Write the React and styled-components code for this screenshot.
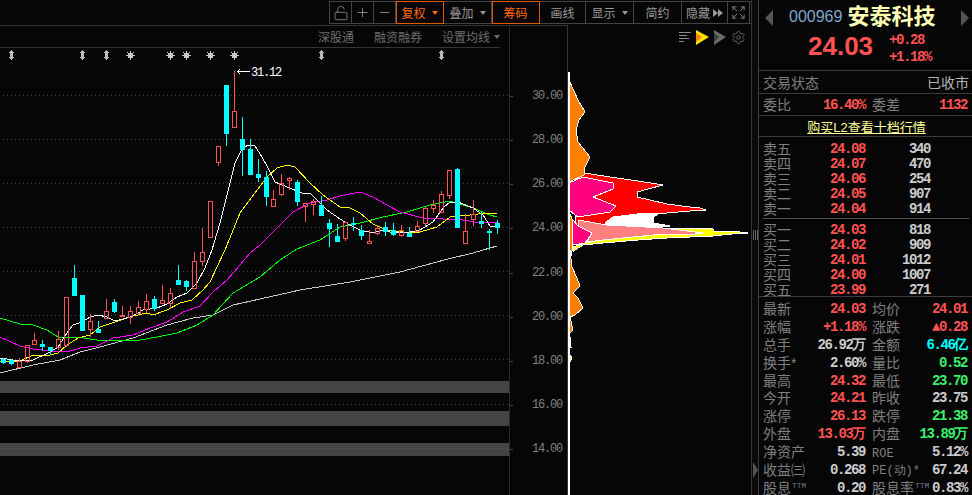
import React from "react"
import styled, { createGlobalStyle } from "styled-components"
import { LockOpen, Plus, Minus, Expand, Settings } from "lucide-react"

const RED = "#ff5252"
const CYAN = "#00ffff"
const GREEN = "#3cf06c"
const LIGHT = "#cccccc"
const MONO = `"Liberation Mono", "DejaVu Sans Mono", monospace`
const CJK = `"Liberation Sans", "Noto Sans CJK SC", sans-serif`

const GlobalStyle = createGlobalStyle`
  html, body {
    margin: 0;
    padding: 0;
    background: #060606;
  }
  * {
    box-sizing: border-box;
  }
`

const Page = styled.div`
  width: 972px;
  height: 495px;
  display: flex;
  background: #060606;
  overflow: hidden;
  font-family: ${CJK};
`

const Main = styled.div`
  width: 751px;
  display: flex;
  flex-direction: column;
`

const TopBar = styled.div`
  height: 25px;
  padding: 1px 0 0 329px;
`

const Toolbar = styled.div`
  display: flex;
  height: 23px;
  border: 1px solid #444;
  border-right: 0;
`

const Tool = styled.div`
  width: ${(p) => p.$w}px;
  display: flex;
  align-items: center;
  justify-content: center;
  gap: 6px;
  flex: none;
  margin: -1px 0;
  height: 23px;
  border-right: 1px solid #444;
  border-top: 1px solid #444;
  border-bottom: 1px solid #444;
  color: ${(p) => (p.$active ? "#ff6a10" : "#999")};
  font-size: 12px;
  ${(p) => p.$active && "outline: 1px solid #e05a00; outline-offset: -1px;"}
`

const Caret = styled.span`
  width: 0;
  height: 0;
  border-left: 3px solid transparent;
  border-right: 3px solid transparent;
  border-top: 4px solid ${(p) => p.$color || "#999"};
`

const Chevrons = styled.span`
  display: flex;
  margin-left: -3px;
  & > i {
    width: 0;
    height: 0;
    border-top: 4px solid transparent;
    border-bottom: 4px solid transparent;
    border-left: 5px solid #999;
  }
`

const Body = styled.div`
  flex: 1;
  display: flex;
`

const KlineCol = styled.div`
  width: 510px;
  border-top: 1px solid #333;
  border-right: 1px solid #2a2a2a;
`

const SubBar = styled.div`
  width: 500px;
  height: 22px;
  display: flex;
  align-items: center;
  justify-content: flex-end;
  gap: 20px;
  border-bottom: 1px solid #333;
  color: #6e6e6e;
  font-size: 12px;
`

const SubItem = styled.span`
  display: flex;
  align-items: center;
  gap: 4px;
`

const KlineSvg = styled.svg`
  display: block;
  width: 509px;
  height: 447px;
`

const AxisCol = styled.div`
  width: 58px;
  padding-top: 48px;
  border-top: 1px solid #333;
  border-right: 1px solid #333;
`

const AxisLabel = styled.div`
  position: relative;
  height: 44.15px;
  display: flex;
  align-items: center;
  padding-left: 22px;
  color: #808080;
  font: 12px ${MONO};
  letter-spacing: -1.2px;
  &::before {
    content: "";
    position: absolute;
    left: 0;
    top: 50%;
    width: 3px;
    height: 1px;
    background: #444;
  }
`

const ChipCol = styled.div`
  width: 183px;
  display: flex;
  flex-direction: column;
  padding-top: 1px;
`

const ChipHead = styled.div`
  height: 22px;
  display: flex;
  align-items: center;
  justify-content: flex-end;
  gap: 5px;
  padding-right: 5px;
`

const ChipSvg = styled.svg`
  display: block;
  width: 183px;
  height: 447px;
`

const Handle = styled.div`
  width: 7px;
  display: flex;
  flex-direction: column;
  align-items: center;
  padding-top: 230px;
  border-left: 1px solid #333;
  background: #0a0a0a;
`

const Grip = styled.div`
  width: 5px;
  height: 10px;
  background: repeating-linear-gradient(90deg, #666 0 1px, transparent 1px 2px);
`

const Nudge = styled.div`
  margin-top: 222px;
  width: 0;
  height: 0;
  border-top: 8px solid transparent;
  border-bottom: 8px solid transparent;
  border-left: 5px solid #555;
`

const Side = styled.div`
  flex: 1;
  border-left: 1px solid #3c3c3c;
  color: #808080;
  font-size: 14px;
`

const TitleRow = styled.div`
  height: 30px;
  display: flex;
  align-items: flex-start;
  padding: 6px 3px 0 6px;
`

const Arrow = styled.span`
  width: 0;
  height: 0;
  margin-top: 4px;
  border-top: 8px solid transparent;
  border-bottom: 8px solid transparent;
  ${(p) => (p.$right ? "border-left: 8px solid #555; margin-left: auto;" : "border-right: 8px solid #555;")}
`

const Code = styled.span`
  margin-left: 16px;
  line-height: 22px;
  color: #7fa6cc;
  font-size: 16px;
`

const Name = styled.span`
  margin-left: 5px;
  line-height: 22px;
  color: #ffffb4;
  font-size: 22px;
  font-weight: 700;
`

const PriceRow = styled.div`
  height: 41px;
  display: flex;
  align-items: center;
  padding: 0 0 7px 49px;
  border-bottom: 1px solid #3c3c3c;
`

const Price = styled.span`
  width: 81px;
  color: ${RED};
  font-size: 26px;
  font-weight: 700;
`

const Change = styled.div`
  margin-top: 4px;
  color: ${RED};
  font: bold 14px/17px ${MONO};
  letter-spacing: -1.4px;
`

const InfoRow = styled.div`
  height: ${(p) => p.$h}px;
  display: grid;
  grid-template-columns: 103px 96px;
  column-gap: 6px;
  align-items: center;
  padding-left: 4px;
  border-bottom: 1px solid #3c3c3c;
`

const StatusRow = styled.div`
  height: 23px;
  display: flex;
  align-items: center;
  justify-content: space-between;
  padding: 0 3px 0 4px;
  border-bottom: 1px solid #3c3c3c;
`

const StatusValue = styled.span`
  color: #b4b4b4;
`

const LinkRow = styled.div`
  height: 21px;
  display: flex;
  align-items: center;
  justify-content: center;
  padding-left: 2px;
  border-bottom: 1px solid #3c3c3c;
  color: #ffff96;
  font-size: 13px;
  text-decoration: underline;
`

const Book = styled.div`
  height: 160px;
  padding: 4px 0 0 4px;
  border-bottom: 1px solid #3c3c3c;
`

const BookRow = styled.div`
  height: 15px;
  display: grid;
  grid-template-columns: 62px 41px 65px;
  align-items: center;
  line-height: 15px;
`

const BookDivider = styled.div`
  height: 1px;
  margin: 2px 3px 3px 0;
  background: #555;
`

const Right = styled.span`
  padding-right: 1px;
  text-align: right;
  white-space: nowrap;
  color: ${(p) => p.$color || LIGHT};
  font: bold 14px ${MONO};
  letter-spacing: -1.4px;
`

const Stats = styled.div`
  display: grid;
  grid-template-columns: 103px 96px;
  column-gap: 6px;
  grid-auto-rows: 17.9px;
  padding: 3px 0 0 4px;
`

const Cell = styled.div`
  display: flex;
  align-items: center;
  justify-content: space-between;
  line-height: 16px;
  white-space: nowrap;
`

const MonoLabel = styled.span`
  font: 12px ${MONO};
`

const Ttm = styled.sup`
  margin-left: 1px;
  color: #6c7a88;
  font: 8px ${MONO};
  vertical-align: 5px;
  line-height: 0;
`

// page coordinates, the svg viewBox starts at y = 48
const ma5 = "0,358 20,361 33,360 50,352 58,347 67,333 73,325 82,322 90,317 98,315 107,317 115,321 123,319 133,316 143,310 157,308 167,304 177,297 187,293 197,283 205,268 212,250 220,223 230,183 235,163 242,149 248,145 255,146 262,157 268,168 275,182 287,187 302,193 310,193 317,200 327,210 340,219 350,225 360,230 373,233 383,230 393,233 410,232 420,230 433,222 443,208 450,202 458,202 473,208 483,215 490,226 497,226"
const ma10 = "0,361 20,361 33,355 50,355 58,353 67,345 78,338 90,335 100,327 115,322 133,316 147,313 153,315 167,310 180,303 192,300 203,290 210,282 217,267 225,250 240,213 252,197 267,177 277,168 287,165 295,167 310,183 323,195 340,207 350,208 360,213 373,224 387,230 403,232 420,232 437,227 450,217 470,215 487,213 497,213"
const ma20 = "0,337 20,346 33,349 50,351 67,352 80,348 97,346 113,338 133,335 150,328 167,322 183,312 200,306 213,292 227,280 240,265 250,253 260,245 277,228 293,212 310,203 327,200 340,196 360,192 373,197 387,205 400,212 423,218 443,219 463,220 480,223 497,222"
const ma30 = "0,318 20,324 33,325 47,330 58,337 77,337 97,340 117,340 140,340 157,337 177,333 197,325 213,315 233,293 260,277 280,260 297,249 320,240 340,227 360,223 383,217 407,212 430,205 450,201 473,208 490,215 497,217"
const ma60 = "0,373 33,365 60,360 80,352 100,347 133,338 167,325 193,318 213,315 233,305 260,299 300,290 350,282 400,272 448,259 473,253 490,248 497,246"

// x, body top, body bottom, wick top, wick bottom, up
const candles = [
  [3, 359, 362, 358, 364, 0], [11, 360, 363, 359, 365, 0], [19, 361, 367, 358, 367, 1],
  [27, 345, 361, 345, 363, 1], [34, 340, 344, 333, 345, 1], [42, 344, 346, 340, 351, 0],
  [50, 347, 350, 347, 355, 0], [58, 339, 347, 331, 350, 1], [66, 297, 345, 297, 347, 1],
  [74, 278, 295, 265, 296, 0], [82, 295, 330, 295, 331, 0], [90, 321, 329, 314, 337, 1],
  [98, 329, 332, 321, 333, 0], [106, 311, 318, 299, 318, 1], [114, 302, 311, 299, 313, 0],
  [122, 315, 316, 306, 317, 1], [130, 311, 317, 306, 324, 1], [138, 307, 313, 301, 313, 1],
  [146, 301, 309, 294, 313, 1], [154, 299, 308, 296, 311, 0], [162, 300, 303, 285, 303, 1],
  [170, 293, 303, 288, 309, 1], [178, 280, 284, 265, 285, 0], [186, 281, 286, 280, 291, 0],
  [194, 261, 288, 252, 288, 1], [202, 252, 261, 228, 266, 1], [210, 201, 237, 201, 237, 1],
  [218, 146, 162, 146, 166, 1], [226, 85, 133, 85, 146, 0], [234, 111, 127, 71, 128, 1],
  [242, 139, 149, 117, 176, 0], [250, 149, 174, 139, 175, 0], [258, 174, 177, 159, 182, 0],
  [266, 177, 196, 171, 206, 0], [273, 199, 206, 190, 207, 1], [281, 183, 194, 174, 196, 1],
  [289, 178, 180, 177, 190, 1], [297, 182, 201, 180, 206, 0], [305, 203, 206, 203, 222, 1],
  [313, 201, 204, 199, 215, 1], [321, 205, 215, 196, 216, 0], [329, 223, 228, 219, 247, 0],
  [337, 236, 241, 224, 242, 0], [345, 222, 238, 222, 241, 1], [353, 223, 224, 217, 231, 0],
  [361, 230, 235, 225, 240, 0], [369, 241, 243, 230, 243, 1], [377, 228, 233, 225, 235, 1],
  [385, 227, 231, 222, 236, 0], [393, 230, 234, 223, 236, 0], [401, 230, 235, 225, 237, 1],
  [409, 233, 236, 227, 237, 0], [417, 226, 231, 221, 232, 1], [425, 208, 223, 207, 226, 1],
  [433, 205, 208, 200, 213, 1], [441, 194, 212, 191, 213, 1], [449, 170, 195, 170, 199, 1],
  [457, 169, 227, 168, 227, 0], [465, 231, 243, 214, 244, 1], [473, 214, 219, 200, 226, 1],
  [481, 221, 223, 212, 228, 0], [489, 231, 232, 229, 250, 0], [497, 223, 227, 220, 234, 0],
]

const grid = [95, 139, 183, 227, 271, 315, 359, 404, 448]
const bands = [[381, 12], [411, 15], [443, 13]]
const diamonds = [11, 82, 106, 321, 441]
const stars = [130, 170, 186, 210, 234]

function Candle({ c }) {
  const [x, top, bottom, wickTop, wickBottom, up] = c
  const color = up ? RED : CYAN
  const mid = x + 0.5
  return (
    <g>
      <line x1={mid} x2={mid} y1={wickTop} y2={top} stroke={color} />
      <line x1={mid} x2={mid} y1={bottom} y2={wickBottom} stroke={color} />
      {up ? (
        <rect x={x - 2 + 0.5} y={top + 0.5} width={4} height={Math.max(bottom - top, 1)} fill="none" stroke={color} />
      ) : (
        <rect x={x - 2} y={top} width={5} height={Math.max(bottom - top, 1) + 1} fill={color} />
      )}
    </g>
  )
}

function Kline() {
  return (
    <KlineSvg viewBox="0 48 509 447" shapeRendering="crispEdges">
      {bands.map(([y, h]) => (
        <rect key={y} x="0" y={y} width="509" height={h} fill="#444" />
      ))}
      {grid.map((y) => (
        <line key={y} x1="3" x2="509" y1={y + 0.5} y2={y + 0.5} stroke={y === 448 ? "#666" : "#444"} strokeDasharray="1 3" />
      ))}
      {diamonds.map((x) => (
        <path
          key={x}
          d={`M${x + 0.5} 50 L${x + 3} 53 H${x + 2} V57 H${x + 3} L${x + 0.5} 60 L${x - 2} 57 H${x - 1} V53 H${x - 2} Z`}
          fill="#bbb"
        />
      ))}
      {stars.map((x) => (
        <g key={x} stroke="#c8c8c8">
          <circle cx={x + 0.5} cy="55.5" r="2.5" fill="#c8c8c8" stroke="none" />
          <line x1={x + 0.5} x2={x + 0.5} y1="51" y2="60" />
          <line x1={x - 4} x2={x + 5} y1="55.5" y2="55.5" />
          <line x1={x - 2.5} x2={x + 3.5} y1="52.5" y2="58.5" />
          <line x1={x - 2.5} x2={x + 3.5} y1="58.5" y2="52.5" />
        </g>
      ))}
      <polyline points={ma60} fill="none" stroke="#c8c8c8" />
      <polyline points={ma30} fill="none" stroke="#00ff00" />
      <polyline points={ma20} fill="none" stroke="#ff00ff" />
      <polyline points={ma10} fill="none" stroke="#ffff00" />
      <polyline points={ma5} fill="none" stroke="#ffffff" />
      {candles.map((c) => (
        <Candle key={c[0]} c={c} />
      ))}
      <path d="M237 71.5 H250 M237 71.5 L240 69.5 M237 71.5 L240 73.5" fill="none" stroke="#fff" />
      <text x="251" y="75.5" fill="#fff" fontFamily={MONO} fontSize="12" letterSpacing="-1.2" shapeRendering="auto">31.12</text>
    </KlineSvg>
  )
}

const chipShapes = [
  ["#00ffff", "690,211 708,210 690,208"],
  ["#ff0000", "584,173 610,177 638,181 663,185 637,192 637,197 667,204 690,207 700,208 706,210 690,211 667,213 637,215 613,217 605,223 607,225 578,226 575,226 575,180"],
  ["#ffffff", "605,223 613,217 637,214 660,213 653,217 654,223 670,226 610,226"],
  ["#ffff00", "663,228 713,229 714,231 732,231 748,233 732,234 713,236 667,238 638,240 603,243 583,245 575,250 573,252 573,247 585,243"],
  ["#ff8080", "578,220 607,225 663,228 703,233 695,234 663,234 643,236 603,240 587,242 592,233 578,226"],
  ["#ff0080", "569,183 583,177 613,183 613,189 593,197 616,206 610,212 578,217 570,211"],
  ["#ff0080", "573,220 578,226 592,233 585,243 573,245 572,232"],
  ["#ff8000", "569,80 578,100 585,112 579,120 576,130 578,142 590,157 585,167 584,175 569,182"],
  ["#ff8000", "569,211 573,222 572,232 573,245 570,262 569,262"],
  ["#ff8000", "570,250 572,267 577,278 580,286 573,293 578,298 583,308 575,315 570,317 573,330 570,333 569,333"],
  ["#ff8000", "570,337 571,347 569,347"],
  ["#ffff00", "569,355 572,357 570,362 569,362"],
]

function Chips() {
  return (
    <ChipSvg viewBox="568 48 183 447" shapeRendering="crispEdges">
      {chipShapes.map(([fill, points]) => (
        <polygon key={points} points={points} fill={fill} stroke={fill === "#00ffff" ? "none" : "#fff"} />
      ))}
      <line x1="568.5" x2="568.5" y1="72" y2="495" stroke="#fff" strokeWidth="2" />
    </ChipSvg>
  )
}

function ChipTools() {
  return (
    <ChipHead>
      <svg width="12" height="13" viewBox="0 0 12 13" stroke="#8c8c8c" shapeRendering="crispEdges">
        <path d="M0 1.5H12M0 4.5H8M0 7.5H10M0 10.5H5" />
      </svg>
      <svg width="13" height="15" viewBox="0 0 13 15">
        <path d="M0 0L13 7L0 15Z" fill="#ffe000" />
        <path d="M0 3L6 7L0 12Z" fill="#ff8000" />
      </svg>
      <svg width="12" height="15" viewBox="0 0 12 15">
        <path d="M0 0L12 7L0 15Z" fill="#6a6a6a" />
        <path d="M0 3L5 7L0 12Z" fill="#3c3c3c" />
      </svg>
      <Settings size={15} color="#606060" strokeWidth={1.6} />
    </ChipHead>
  )
}

const sells = [
  ["卖五", "24.08", "340"],
  ["卖四", "24.07", "470"],
  ["卖三", "24.06", "254"],
  ["卖二", "24.05", "907"],
  ["卖一", "24.04", "914"],
]
const buys = [
  ["买一", "24.03", "818"],
  ["买二", "24.02", "909"],
  ["买三", "24.01", "1012"],
  ["买四", "24.00", "1007"],
  ["买五", "23.99", "271"],
]

const stats = [
  ["最新", "24.03", RED, "均价", "24.01", RED],
  ["涨幅", "+1.18%", RED, "涨跌", "▲0.28", RED],
  ["总手", "26.92万", LIGHT, "金额", "6.46亿", CYAN],
  ["换手*", "2.60%", LIGHT, "量比", "0.52", GREEN],
  ["最高", "24.32", RED, "最低", "23.70", GREEN],
  ["今开", "24.21", RED, "昨收", "23.75", LIGHT],
  ["涨停", "26.13", RED, "跌停", "21.38", GREEN],
  ["外盘", "13.03万", RED, "内盘", "13.89万", GREEN],
  ["净资产", "5.39", LIGHT, <MonoLabel>ROE</MonoLabel>, "5.12%", LIGHT],
  ["收益㈢", "0.268", LIGHT, <MonoLabel>PE(动)*</MonoLabel>, "67.24", LIGHT],
  [<span>股息<Ttm>TTM</Ttm></span>, "0.20", LIGHT, <span>股息率<Ttm>TTM</Ttm></span>, "0.83%", LIGHT],
]

function BookRows({ rows }) {
  return rows.map(([label, price, volume]) => (
    <BookRow key={label}>
      <span>{label}</span>
      <Right $color={RED}>{price}</Right>
      <Right>{volume}</Right>
    </BookRow>
  ))
}

export default function App() {
  return (
    <Page>
      <GlobalStyle />
      <Main>
        <TopBar>
          <Toolbar>
            <Tool $w={22}><LockOpen size={16} color="#777" strokeWidth={1.5} /></Tool>
            <Tool $w={22}><Plus size={15} color="#999" strokeWidth={1.3} /></Tool>
            <Tool $w={22}><Minus size={15} color="#999" strokeWidth={1.3} /></Tool>
            <Tool $w={48} $active>复权<Caret $color="#ff6a10" /></Tool>
            <Tool $w={48}>叠加<Caret /></Tool>
            <Tool $w={48} $active>筹码</Tool>
            <Tool $w={46}>画线</Tool>
            <Tool $w={48}>显示<Caret /></Tool>
            <Tool $w={48}>简约</Tool>
            <Tool $w={46}>隐藏<Chevrons><i /><i /></Chevrons></Tool>
            <Tool $w={22}><Expand size={15} color="#999" strokeWidth={1.3} /></Tool>
          </Toolbar>
        </TopBar>
        <Body>
          <KlineCol>
            <SubBar>
              <SubItem>深股通</SubItem>
              <SubItem>融资融券</SubItem>
              <SubItem>设置均线<Caret $color="#6e6e6e" /></SubItem>
            </SubBar>
            <Kline />
          </KlineCol>
          <AxisCol>
            {["30.00", "28.00", "26.00", "24.00", "22.00", "20.00", "18.00", "16.00", "14.00"].map((v) => (
              <AxisLabel key={v}>{v}</AxisLabel>
            ))}
          </AxisCol>
          <ChipCol>
            <ChipTools />
            <Chips />
          </ChipCol>
        </Body>
      </Main>
      <Handle>
        <Grip />
        <Nudge />
      </Handle>
      <Side>
        <TitleRow>
          <Arrow />
          <Code>000969</Code>
          <Name>安泰科技</Name>
          <Arrow $right />
        </TitleRow>
        <PriceRow>
          <Price>24.03</Price>
          <Change>
            <div>+0.28</div>
            <div>+1.18%</div>
          </Change>
        </PriceRow>
        <StatusRow>
          <span>交易状态</span>
          <StatusValue>已收市</StatusValue>
        </StatusRow>
        <InfoRow $h={22}>
          <Cell><span>委比</span><Right $color={RED}>16.40%</Right></Cell>
          <Cell><span>委差</span><Right $color={RED}>1132</Right></Cell>
        </InfoRow>
        <LinkRow>购买L2查看十档行情</LinkRow>
        <Book>
          <BookRows rows={sells} />
          <BookDivider />
          <BookRows rows={buys} />
        </Book>
        <Stats>
          {stats.map((s, i) => (
            <React.Fragment key={i}>
              <Cell><span>{s[0]}</span><Right $color={s[2]}>{s[1]}</Right></Cell>
              <Cell><span>{s[3]}</span><Right $color={s[5]}>{s[4]}</Right></Cell>
            </React.Fragment>
          ))}
        </Stats>
      </Side>
    </Page>
  )
}
